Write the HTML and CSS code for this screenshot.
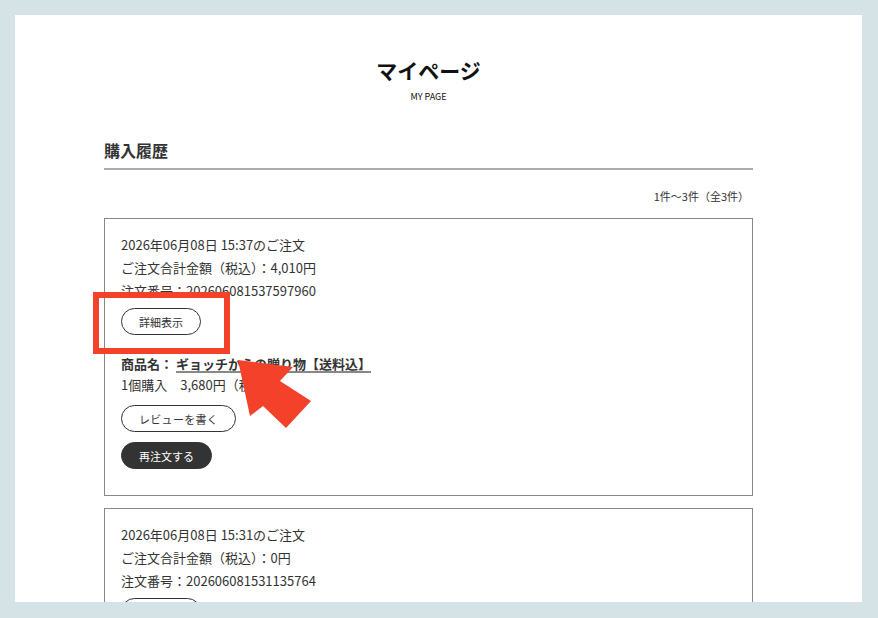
FILE: index.html
```html
<!DOCTYPE html>
<html lang="ja">
<head>
    <meta charset="UTF-8">
    <meta name="viewport" content="width=device-width, initial-scale=1.0">
    <title>マイページ</title>
    <link rel="stylesheet" href="styles.css">
</head>
<body>
    <div class="page">
        <div class="content">
            <!-- Page title -->
            <div class="page-title">
                <h1>マイページ</h1>
                <p class="sub">MY PAGE</p>
            </div>

            <!-- Order history -->
            <h2 class="section-title">購入履歴</h2>
            <p class="count">1件〜3件（全3件）</p>

            <div class="order">
                <p>2026年06月08日 15:37のご注文</p>
                <p>ご注文合計金額（税込）：4,010円</p>
                <p>注文番号：202606081537597960</p>
                <a href="#" class="btn">詳細表示</a>
                <div class="item">
                    <p class="item-name">商品名：<a href="#">ギョッチからの贈り物【送料込】</a></p>
                    <p>1個購入　3,680円（税込）</p>
                </div>
                <a href="#" class="btn btn-review">レビューを書く</a>
                <a href="#" class="btn btn-dark">再注文する</a>
            </div>

            <div class="order">
                <p>2026年06月08日 15:31のご注文</p>
                <p>ご注文合計金額（税込）：0円</p>
                <p>注文番号：202606081531135764</p>
                <a href="#" class="btn">詳細表示</a>
            </div>
        </div>

        <!-- Callout overlay -->
        <svg class="callout" width="847" height="587" viewBox="15 15 847 587">
            <rect x="96" y="295" width="131" height="56" fill="none" stroke="#f4412a" stroke-width="6"/>
            <polygon points="238,360 293,367 280,381 311,401 286,428 263,406 250,416" fill="#f4412a"/>
        </svg>
    </div>
</body>
</html>
```

FILE: styles.css
```css
/* General */
body {
    margin: 0;
    padding: 15px 16px 16px 15px;
    background-color: #d5e3e6;
    font-family: "Noto Sans CJK JP", "Noto Sans", sans-serif;
    color: #333;
    height: 618px;
    box-sizing: border-box;
    overflow: hidden;
}

p {
    margin: 0;
}

.page {
    position: relative;
    background-color: #fff;
    height: 587px;
    overflow: hidden;
}

.content {
    width: 649px;
    margin-left: 89px;
}

/* Title */
.page-title {
    text-align: center;
    padding-top: 40px;
    color: #111;
}

.page-title h1 {
    margin: 0;
    font-size: 21px;
    line-height: 30px;
    font-weight: bold;
}

.page-title .sub {
    margin-top: 5px;
    font-size: 9px;
    line-height: 14px;
}

.section-title {
    margin: 35px 0 0;
    padding-bottom: 7px;
    font-size: 16px;
    line-height: 22px;
    font-weight: bold;
    border-bottom: 2px solid #aaa;
}

.count {
    margin: 18px 4px 14px 0;
    text-align: right;
    font-size: 11px;
    line-height: 16px;
}

/* Order card */
.order {
    border: 1px solid #888;
    padding: 14px 16px 26px;
    margin-bottom: 12px;
    font-size: 13px;
    line-height: 23px;
}

.btn {
    display: flex;
    width: fit-content;
    align-items: center;
    height: 27px;
    box-sizing: border-box;
    padding: 0 17px;
    margin-top: 6px;
    border: 1px solid #333;
    border-radius: 14px;
    color: #333;
    font-size: 11px;
    line-height: 16px;
    text-decoration: none;
}

.item {
    margin-top: 18px;
    line-height: 21px;
}

.item-name {
    font-weight: bold;
}

.item-name a {
    display: inline-block;
    line-height: 14px;
    margin-left: 3px;
    color: #333;
    text-decoration: none;
    border-bottom: 2px solid #888;
}

.btn-review {
    margin-top: 10px;
    letter-spacing: 0.3px;
}

.btn-dark {
    margin-top: 10px;
    background-color: #333;
    color: #fff;
}

/* Callout */
.callout {
    position: absolute;
    top: 0;
    left: 0;
    pointer-events: none;
}
```
